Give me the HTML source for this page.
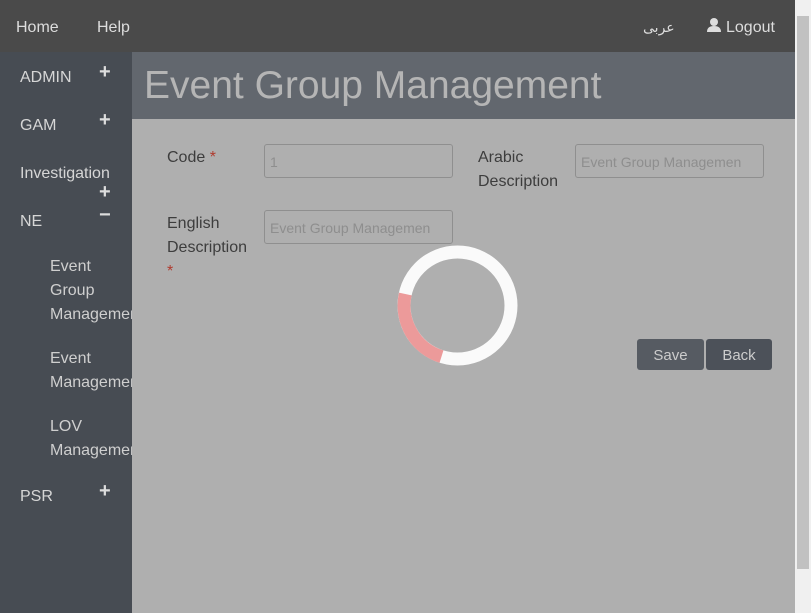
<!DOCTYPE html>
<html><head><meta charset="utf-8"><style>
*{margin:0;padding:0;box-sizing:border-box}
body{width:811px;height:613px;overflow:hidden;background:#afafaf;font-family:"Liberation Sans","DejaVu Sans",sans-serif;position:relative}
.a{position:absolute;white-space:nowrap}
#nav{left:0;top:0;width:795px;height:52px;background:#4a4a4a}
#side{left:0;top:52px;width:132px;height:561px;background:#474c53;overflow:hidden}
#head{left:132px;top:52px;width:663px;height:67px;background:#62676e}
#sb{left:795px;top:0;width:16px;height:613px;background:#f0f0f0}
#thumb{left:797px;top:16px;width:12px;height:553px;background:#c1c1c1}
.nv{color:#ddd;font-size:16px;top:19px}
.s{color:#d6d6d6;font-size:16px}
.sub{color:#cfcfcf;font-size:16px;line-height:24px;white-space:normal;width:100px}
.pl{color:#ddd;font-size:20px;font-weight:bold}
.lb{color:#3d3d3d;font-size:16px;line-height:24px}
.st{color:#b03a2e}
.in{border:1px solid #8f8f8f;border-radius:3px;height:34px;color:#8e8e8e;font-size:14px;padding:9px 5px;overflow:hidden}
.bt{background:#565b62;color:#ccc;font-size:15px;height:31px;border-radius:3px;text-align:center;line-height:33px}
</style></head><body>
<div class="a" id="nav"></div>
<div class="a nv" style="left:16px">Home</div>
<div class="a nv" style="left:97px">Help</div>
<div class="a nv" style="left:643px;font-size:14px;top:19px">عربى</div>
<svg class="a" style="left:706px;top:17px" width="16" height="16" viewBox="0 0 16 16"><circle cx="8" cy="5" r="4" fill="#ddd"/><path d="M1 15 Q1 9 8 9 Q15 9 15 15Z" fill="#ddd"/></svg>
<div class="a nv" style="left:726px">Logout</div>
<div class="a" id="side"></div>
<div class="a s" style="left:20px;top:69px">ADMIN</div><div class="a pl" style="left:99px;top:61px">+</div>
<div class="a s" style="left:20px;top:117px">GAM</div><div class="a pl" style="left:99px;top:109px">+</div>
<div class="a s" style="left:20px;top:165px">Investigation</div><div class="a pl" style="left:99px;top:181px">+</div>
<div class="a s" style="left:20px;top:213px">NE</div><div class="a pl" style="left:99px;top:204px">−</div>
<div class="a sub" style="left:50px;top:255px;width:82px;overflow:hidden">Event<br>Group<br>Management</div>
<div class="a sub" style="left:50px;top:347px;width:82px;overflow:hidden">Event<br>Management</div>
<div class="a sub" style="left:50px;top:415px;width:82px;overflow:hidden">LOV<br>Management</div>
<div class="a s" style="left:20px;top:488px">PSR</div><div class="a pl" style="left:99px;top:480px">+</div>
<div class="a" id="head"></div>
<div class="a" style="left:144px;top:64px;font-size:39px;color:#b5b5b5">Event Group Management</div>
<div class="a lb" style="left:167px;top:146px">Code <span class="st">*</span></div>
<div class="a in" style="left:264px;top:144px;width:189px">1</div>
<div class="a lb" style="left:478px;top:146px">Arabic<br>Description</div>
<div class="a in" style="left:575px;top:144px;width:189px">Event Group Managemen</div>
<div class="a lb" style="left:167px;top:212px">English<br>Description<br><span class="st">*</span></div>
<div class="a in" style="left:264px;top:210px;width:189px">Event Group Managemen</div>
<svg class="a" style="left:397px;top:245px" width="121" height="121" viewBox="0 0 121 121">
<circle cx="60.5" cy="60.5" r="53.5" fill="none" stroke="#fafafa" stroke-width="13"/>
<path d="M8.3 49 A53.5 53.5 0 0 0 44.5 111.6" fill="none" stroke="#ec9a9a" stroke-width="13"/>
</svg>
<div class="a bt" style="left:637px;top:339px;width:67px">Save</div>
<div class="a bt" style="left:706px;top:339px;width:66px;background:#4c5159">Back</div>
<div class="a" id="sb"></div><div class="a" id="thumb"></div>
</body></html>
